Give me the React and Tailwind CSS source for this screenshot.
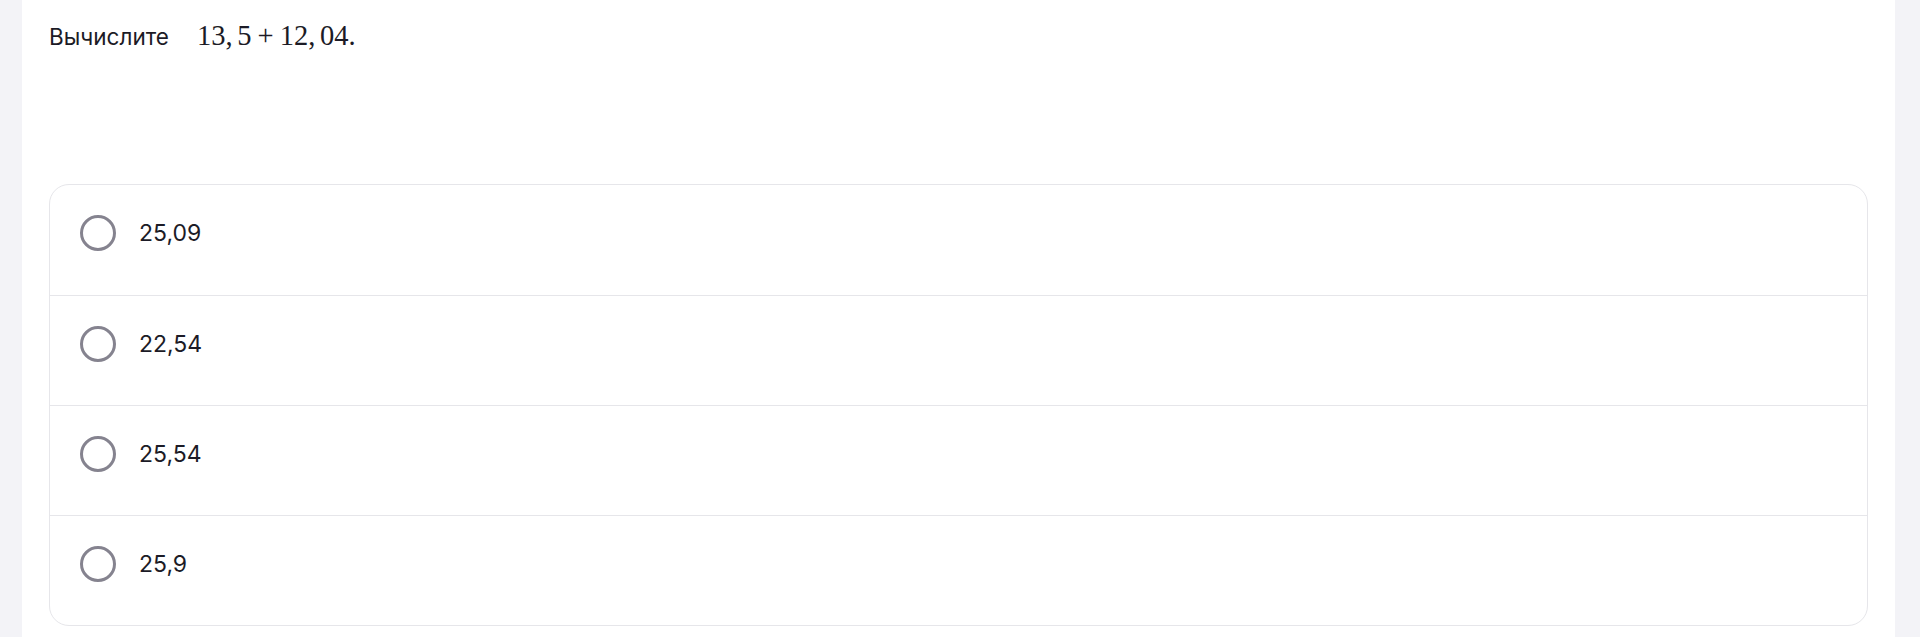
import React from "react";

const options = ["25,09", "22,54", "25,54", "25,9"];

function MathExpr() {
  return (
    <span
      className="inline-flex items-baseline text-[28.5px] text-[#1c1b26]"
      style={{ fontFamily: '"Liberation Serif", "DejaVu Serif", serif' }}
    >
      <span>13</span>
      <span className="mr-[4.6px]">,</span>
      <span>5</span>
      <span className="mx-[6.2px]">+</span>
      <span>12</span>
      <span className="mr-[4.6px]">,</span>
      <span>04</span>
      <span>.</span>
    </span>
  );
}

export default function App() {
  return (
    <div
      className="min-h-[637px] w-full bg-[#f3f3f7] pl-[22px] pr-[25px]"
      style={{ fontFamily: 'Inter, "Noto Sans", sans-serif' }}
    >
      <div className="min-h-[637px] bg-white px-[27px] pt-[20px] pb-[13px]">
        <div className="flex items-baseline h-[32px] leading-[32px]">
          <span className="text-[22.5px] text-[#1c1b26]">Вычислите</span>
          <span className="ml-[28px]">
            <MathExpr />
          </span>
        </div>
        <div className="mt-[132px] rounded-[20px] border border-[#e6e6ea] overflow-hidden">
          {options.map((o, i) => (
            <div
              key={o}
              className={`flex items-start h-[110px] pl-[30px] pt-[30px] ${i > 0 ? "border-t border-[#e6e6ea]" : ""}`}
            >
              <div className="w-[36px] h-[36px] rounded-full border-[3.5px] border-[#85838f] shrink-0" />
              <div className="ml-[23px] h-[36px] flex items-center text-[23px] text-[#1c1b26]">
                {o}
              </div>
            </div>
          ))}
        </div>
      </div>
    </div>
  );
}
